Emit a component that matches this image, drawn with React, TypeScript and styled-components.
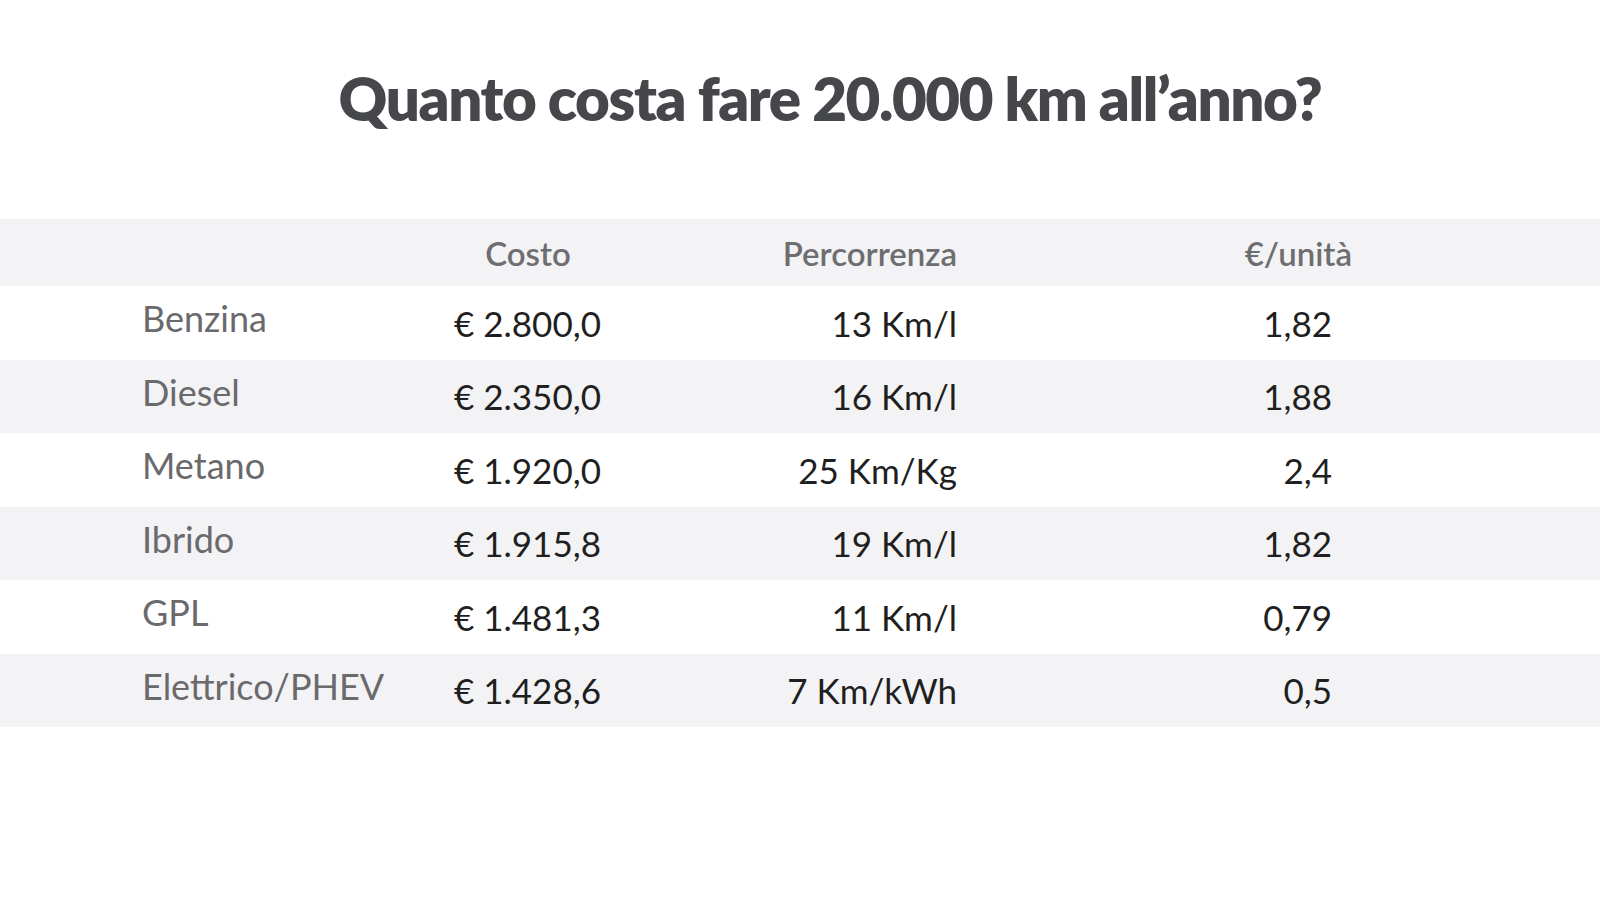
import styled, { createGlobalStyle } from "styled-components";

const rows = [
  { name: "Benzina", cost: "€ 2.800,0", range: "13 Km/l", unit: "1,82" },
  { name: "Diesel", cost: "€ 2.350,0", range: "16 Km/l", unit: "1,88" },
  { name: "Metano", cost: "€ 1.920,0", range: "25 Km/Kg", unit: "2,4" },
  { name: "Ibrido", cost: "€ 1.915,8", range: "19 Km/l", unit: "1,82" },
  { name: "GPL", cost: "€ 1.481,3", range: "11 Km/l", unit: "0,79" },
  { name: "Elettrico/PHEV", cost: "€ 1.428,6", range: "7 Km/kWh", unit: "0,5" },
];

function App() {
  return (
    <Page>
      <GlobalStyle />
      <Title>Quanto costa fare 20.000 km all’anno?</Title>
      <Table>
        <HeaderRow>
          <span />
          <HeadCell>Costo</HeadCell>
          <HeadCell $align="right">Percorrenza</HeadCell>
          <HeadCell $align="right">€/unità</HeadCell>
        </HeaderRow>
        {rows.map((row, i) => (
          <Row key={row.name} $striped={i % 2 === 1}>
            <Label>{row.name}</Label>
            <Value>{row.cost}</Value>
            <Value $align="right">{row.range}</Value>
            <Value $align="right" $pad={20}>{row.unit}</Value>
          </Row>
        ))}
      </Table>
    </Page>
  );
}

const GlobalStyle = createGlobalStyle`
  html, body {
    margin: 0;
    padding: 0;
    background: #ffffff;
  }
  body {
    font-family: Lato, "Open Sans", sans-serif;
  }
`;

const Page = styled.div`
  width: 1600px;
  height: 901px;
  background: #ffffff;
  display: flex;
  flex-direction: column;
`;

const Title = styled.h1`
  margin: 0;
  padding: 62px 0 0 60px;
  height: 157px;
  box-sizing: border-box;
  text-align: center;
  font-family: Lato, sans-serif;
  font-weight: 800;
  font-size: 60px;
  line-height: 72px;
  color: #46474a;
  letter-spacing: -1.4px;
`;

const gridCols = `
  display: grid;
  grid-template-columns: 312px 148px 355px 395px;
  padding-left: 142px;
  align-items: center;
`;

const HeaderRow = styled.div`
  ${gridCols}
  height: 67px;
  background: #f3f3f5;
`;

const HeadCell = styled.div<{ $align?: string }>`
  text-align: ${(p) => p.$align || "center"};
  font-size: 33px;
  font-weight: 600;
  color: #6e6e71;
  padding-top: 1px;
`;

const Table = styled.div`
  display: flex;
  flex-direction: column;
  margin-top: 62px;
`;

const Row = styled.div<{ $striped: boolean }>`
  ${gridCols}
  height: 73.5px;
  background: ${(p) => (p.$striped ? "#f3f3f5" : "#ffffff")};
`;

const Label = styled.div`
  font-size: 36px;
  color: #6a6a6d;
  padding-bottom: 9px;
`;

const Value = styled.div<{ $align?: string; $pad?: number }>`
  text-align: ${(p) => p.$align || "left"};
  padding-right: ${(p) => p.$pad || 0}px;
  font-size: 35px;
  color: #1f1f21;
`;

export default App;
